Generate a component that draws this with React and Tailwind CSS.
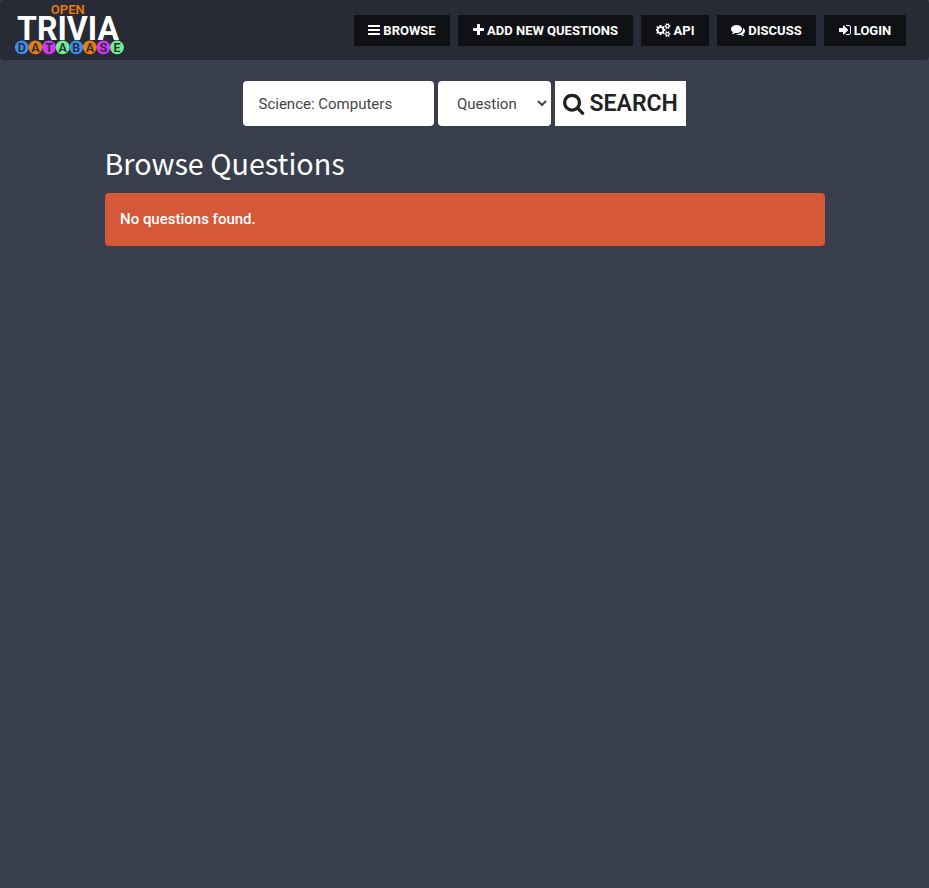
const BARS = "M1664 1344v128q0 26-19 45t-45 19h-1408q-26 0-45-19t-19-45v-128q0-26 19-45t45-19h1408q26 0 45 19t19 45zm0-512v128q0 26-19 45t-45 19h-1408q-26 0-45-19t-19-45v-128q0-26 19-45t45-19h1408q26 0 45 19t19 45zm0-512v128q0 26-19 45t-45 19h-1408q-26 0-45-19t-19-45v-128q0-26 19-45t45-19h1408q26 0 45 19t19 45z";
const PLUS = "M1600 736v192q0 40-28 68t-68 28h-416v416q0 40-28 68t-68 28h-192q-40 0-68-28t-28-68v-416h-416q-40 0-68-28t-28-68v-192q0-40 28-68t68-28h416v-416q0-40 28-68t68-28h192q40 0 68 28t28 68v416h416q40 0 68 28t28 68z";
const SEARCH = "M1216 832q0-185-131.5-316.5t-316.5-131.5-316.5 131.5-131.5 316.5 131.5 316.5 316.5 131.5 316.5-131.5 131.5-316.5zm512 832q0 52-38 90t-90 38q-54 0-90-38l-343-342q-179 124-399 124-143 0-273.5-55.5t-225-150-150-225-55.5-273.5 55.5-273.5 150-225 225-150 273.5-55.5 273.5 55.5 225 150 150 225 55.5 273.5q0 220-124 399l343 343q37 37 37 90z";
const SIGN_IN = "M1312 896q0 26-19 45l-544 544q-19 19-45 19t-45-19-19-45v-288h-448q-26 0-45-19t-19-45v-384q0-26 19-45t45-19h448v-288q0-26 19-45t45-19 45 19l544 544q19 19 19 45zm352-352v704q0 119-84.5 203.5t-203.5 84.5h-320q-13 0-22.5-9.5t-9.5-22.5q0-4-1-20t-.5-26.5 3-23.5 10-19.5 20.5-6.5h320q66 0 113-47t47-113v-704q0-66-47-113t-113-47h-312l-11.5-1-11.5-3-8-5.5-7-9-2-13.5q0-4-1-20t-.5-26.5 3-23.5 10-19.5 20.5-6.5h320q119 0 203.5 84.5t84.5 203.5z";
const COMMENTS = "M1408 768q0 139-94 257t-256.5 186.5-353.5 68.5q-86 0-176-16-124 88-278 128-36 9-86 16h-3q-11 0-20.5-8t-11.5-21q-1-3-1-6.5t.5-6.5 2-6l2.5-5 3.5-5.5 4-5 4.5-5 4-4.5q5-6 23-25t26-29.5 22.5-29 25-38.5 20.5-44q-124-72-195-177t-71-224q0-139 94-257t256.5-186.5 353.5-68.5 353.5 68.5 256.5 186.5 94 257zm384 256q0 120-71 224.5t-195 176.5q10 24 20.5 44t25 38.5 22.5 29 26 29.5 23 25q1 1 4 4.5t4.5 5 4 5 3.5 5.5l2.5 5 2 6 .5 6.5-1 6.5q-3 14-13 22t-22 7q-50-7-86-16-154-40-278-128-90 16-176 16-271 0-472-132 58 4 88 4 161 0 309-45t264-129q125-92 192-212t67-254q0-77-23-152 129 71 204 178t75 230z";
const COG_LARGE = "M832 896q0-106-75-181t-181-75-181 75-75 181 75 181 181 75 181-75 75-181zM1216 805v185q0 10-7 19.5t-16 10.5l-155 24q-11 35-32 76 34 48 90 115 7 11 7 20 0 12-7 19-23 30-82.5 89.5t-78.5 59.5q-11 0-21-7l-115-90q-37 19-77 31-11 108-23 155-7 24-30 24h-186q-11 0-20-7.5t-10-17.5l-23-153q-34-10-75-31l-118 89q-7 7-20 7-11 0-21-8-144-133-144-160 0-9 7-19 10-14 41-53t47-61q-23-44-35-82l-152-24q-10-1-17-9.5t-7-19.5v-185q0-10 7-19.5t16-10.5l155-24q11-35 32-76-34-48-90-115-7-11-7-20 0-12 7-20 22-30 82-89t79-59q11 0 21 7l115 90q34-18 77-32 11-108 23-154 7-24 30-24h186q11 0 20 7.5t10 17.5l23 153q34 10 75 31l118-89q8-7 20-7 11 0 21 8 144 133 144 160 0 8-7 19-12 16-42 54t-45 60q23 48 34 82l152 23q10 2 17 10.5t7 19.5z";
const COG_SMALL = "M1600 1408q0-52-38-90t-90-38-90 38-38 90q0 53 37.5 90.5t90.5 37.5 90.5-37.5 37.5-90.5zM1856 1338v140q0 16-149 31-12 27-30 52 51 113 51 138 0 4-4 7-122 71-124 71-8 0-46-47t-52-68q-20 2-30 2t-30-2q-14 21-52 68t-46 47q-2 0-124-71-4-3-4-7 0-25 51-138-18-25-30-52-149-15-149-31v-140q0-16 149-31 13-29 30-52-51-113-51-138 0-4 4-7 4-2 35-20t59-34 30-16q8 0 46 46.5t52 67.5q20-2 30-2t30 2q51-71 92-112l6-2q4 0 124 70 4 3 4 7 0 25-51 138 17 23 30 52 149 15 149 31z";

function NavButton({ icon, width, children }) {
  return (
    <a href="#" className={`flex h-[31px] items-center justify-center gap-[3px] bg-[#101114] text-[13px] leading-none font-bold whitespace-nowrap text-white ${width}`}>
      {icon}
      <span>{children}</span>
    </a>
  );
}

const LETTERS = [
  ["D", "#3e8df0"], ["A", "#e47e16"], ["T", "#cd3cea"], ["A", "#72ee90"],
  ["B", "#3e8df0"], ["A", "#e47e16"], ["S", "#cd3cea"], ["E", "#72ee90"],
];

function Logo() {
  return (
    <svg width="112" height="60" viewBox="0 0 112 60" fontFamily="Roboto" textAnchor="middle">
      <text x="54.8" y="13.7" fontSize="12.5" fontWeight="600" fill="#e47e10" textLength="34" lengthAdjust="spacingAndGlyphs">OPEN</text>
      <text x="55" y="39.5" fontSize="33" fontWeight="700" fill="#fff" textLength="102" lengthAdjust="spacingAndGlyphs">TRIVIA</text>
      {LETTERS.map(([letter, color], i) => (
        <g key={i}>
          <circle cx={8.8 + i * 13.6} cy="47.3" r="6.9" fill={color} />
          <text x={8.8 + i * 13.6} y="51.8" fontSize="12.5" fontWeight="600" fill="#282a35">{letter}</text>
        </g>
      ))}
    </svg>
  );
}

export default function App() {
  return (
    <div className="min-h-screen bg-[#393e4c] font-[Roboto,sans-serif]">
      <nav className="flex h-[60px] items-center justify-between rounded bg-[#282a35] pr-[23px] pl-[13px]">
        <Logo />
        <div className="flex gap-2">
          <NavButton width="w-[96px]" icon={<svg width="12" height="14" viewBox="128 0 1536 1792" fill="currentColor"><path d={BARS} /></svg>}>BROWSE</NavButton>
          <NavButton width="w-[175px]" icon={<svg width="11" height="14" viewBox="192 0 1408 1792" fill="currentColor"><path d={PLUS} /></svg>}>ADD NEW QUESTIONS</NavButton>
          <NavButton width="w-[68px]" icon={<svg width="15" height="14" viewBox="0 0 1920 1792" fill="currentColor"><path d={COG_LARGE} /><path d={COG_SMALL} /><path d={COG_SMALL} transform="translate(0 -1024)" /></svg>}>API</NavButton>
          <NavButton width="w-[99px]" icon={<svg width="14" height="14" viewBox="0 0 1792 1792" fill="currentColor"><path d={COMMENTS} /></svg>}>DISCUSS</NavButton>
          <NavButton width="w-[82px]" icon={<svg width="12" height="14" viewBox="128 0 1536 1792" fill="currentColor"><path d={SIGN_IN} /></svg>}>LOGIN</NavButton>
        </div>
      </nav>
      <form className="mt-[21px] flex h-[45px] justify-center gap-1 text-[15px] text-[#464545]">
        <input type="text" defaultValue="Science: Computers" className="w-[191px] rounded bg-white pt-[2px] pl-[15.5px] outline-none" />
        <div className="flex w-[113px] items-center justify-between rounded bg-white pr-1 pl-[19px]">
          <span className="pt-[2px]">Question</span>
          <svg width="10" height="7" viewBox="0 0 10 7" fill="none" stroke="#464545" strokeWidth="2"><path d="M1 1l4 4 4-4" /></svg>
        </div>
        <button type="button" className="flex w-[131px] items-center justify-center gap-[5px] bg-white text-[23px] leading-none font-semibold text-[#222]">
          <svg className="mb-px" width="21.4" height="23" viewBox="64 0 1664 1792" fill="currentColor"><path d={SEARCH} /></svg>
          <span>SEARCH</span>
        </button>
      </form>
      <main className="mx-auto w-[720px]">
        <h1 className="mt-[19px] h-[48px] font-['Noto_Sans_CJK_JP',sans-serif] text-[28.7px] leading-[35px] text-white">Browse Questions</h1>
        <div className="h-[53px] rounded bg-[#d55839] pt-[16px] pl-[15.5px] text-[15px] leading-[21px] font-medium text-white">No questions found.</div>
      </main>
    </div>
  );
}
